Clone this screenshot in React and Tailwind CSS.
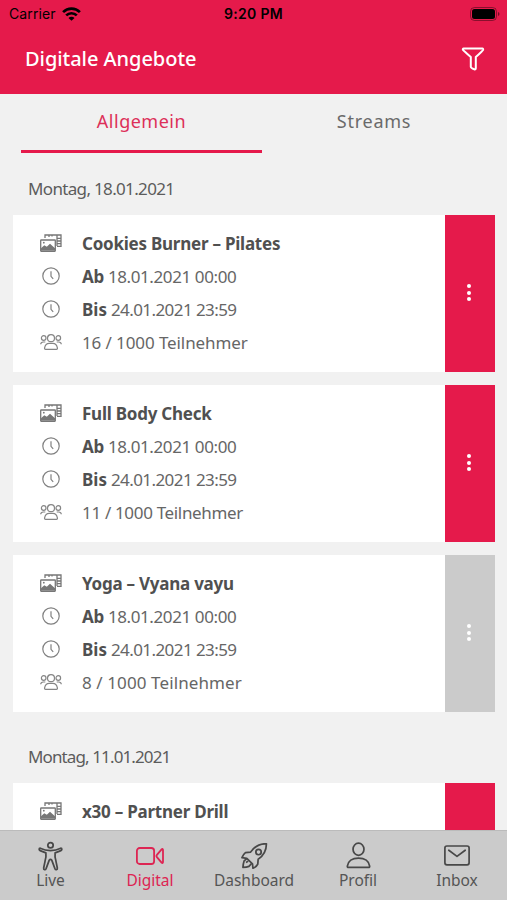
import clsx from "clsx";

const days = [
  {
    label: "Montag, 18.01.2021",
    labelClass: "tracking-[-0.66px]",
    items: [
      {
        title: "Cookies Burner – Pilates",
        from: "18.01.2021 00:00",
        to: "24.01.2021 23:59",
        count: "16 / 1000 Teilnehmer",
        countClass: "tracking-[-0.1px]",
        active: true,
      },
      {
        title: "Full Body Check",
        from: "18.01.2021 00:00",
        to: "24.01.2021 23:59",
        count: "11 / 1000 Teilnehmer",
        countClass: "tracking-[-0.33px]",
        active: true,
      },
      {
        title: "Yoga – Vyana vayu",
        from: "18.01.2021 00:00",
        to: "24.01.2021 23:59",
        count: "8 / 1000 Teilnehmer",
        countClass: "tracking-[0.1px]",
        active: false,
      },
    ],
  },
  {
    label: "Montag, 11.01.2021",
    labelClass: "tracking-[-0.88px]",
    items: [{ title: "x30 – Partner Drill", active: true }],
  },
];

function WifiIcon() {
  return (
    <svg width="19" height="14" viewBox="0 0 19 14" fill="none" stroke="#000" strokeWidth="2.7">
      <path d="M1.1 5.100a12 12 0 0 1 16.800 0" />
      <path d="M4.200 8.400a7.600 7.600 0 0 1 10.600 0" />
      <path d="M9.500 13.800 6.500 10.900a4.200 4.200 0 0 1 6 0z" fill="#000" stroke="none" />
    </svg>
  );
}

function BatteryIcon() {
  return (
    <svg width="30" height="14" viewBox="0 0 30 14">
      <rect x="0.5" y="0.5" width="26" height="13" rx="4" fill="none" stroke="#000" strokeOpacity="0.4" />
      <rect x="2" y="2" width="23" height="10" rx="2.5" fill="#000" />
      <path d="M28 5v4q1.500-.6 1.500-2T28 5" fill="#000" fillOpacity="0.5" />
    </svg>
  );
}

function FilterIcon() {
  return (
    <svg width="24" height="24" viewBox="0 0 24 24" fill="none" stroke="#fff" strokeWidth="2" strokeLinejoin="round">
      <path d="M2.600 1.600h18.800q1 0 .7 1.200-.3.800-7.300 7.300v11q0 1.700-1.500 1.200-3.500-1.400-3.500-2.600v-9.600Q2.300 3.500 1.900 2.800q-.4-1.200.7-1.200z" />
    </svg>
  );
}

function MediaIcon() {
  return (
    <svg width="22" height="18" viewBox="0 0 22 18" fill="none" stroke="#777" strokeWidth="1.300">
      <path d="M5 4V1h16v11.400h-4" />
      <path d="M17 1v11M17.500 4.400H21M17.500 7H21M17.500 9.600H21M9 1v2M12 1v1.500" />
      <rect x="0.700" y="6" width="14.600" height="11.300" rx="0.500" fill="#fff" />
      <path d="m1 16.800v-2.500l3.300-3 2.500 1.500 3.200-3 5 4.500v2.500z" fill="#777" stroke="none" />
      <circle cx="3.800" cy="8.700" r="0.900" fill="#777" stroke="none" />
    </svg>
  );
}

function ClockIcon() {
  return (
    <svg width="18" height="18" viewBox="0 0 18 18" fill="none" stroke="#808080" strokeWidth="1.200">
      <circle cx="9" cy="9" r="8.200" />
      <path d="M9 4.300v5l2.200 2.500" />
    </svg>
  );
}

function GroupIcon() {
  return (
    <svg width="22" height="16" viewBox="0 0 22 16" fill="none" stroke="#858585" strokeWidth="1.200">
      <circle cx="11" cy="4.200" r="3.500" />
      <path d="M5.600 15.300q-1.300 0-1-1.500.9-4.400 4.600-4.400h3.600q3.700 0 4.600 4.400.3 1.500-1 1.500z" />
      <circle cx="3.700" cy="4" r="2.300" />
      <circle cx="18.300" cy="4" r="2.300" />
      <path d="M.7 10.300q.2-2.300 2.600-2.300h2M21.300 10.300q-.2-2.300-2.600-2.300h-2" />
    </svg>
  );
}

function LiveIcon() {
  return (
    <svg width="25" height="30" viewBox="0 0 26 30" fill="none" stroke="#484848" strokeWidth="1.800" strokeLinejoin="round">
      <circle cx="13" cy="3.800" r="2.800" />
      <path d="M2.300 6.900q5 2.500 10.700 2.500t10.700-2.500q1.100 0 1.100 1.100 0 1-1 1.400l-6 2.300q-.5 4 .8 8.300l1.500 7.500q.2 1.400-.9 1.600-1.100.2-1.600-1l-3.200-8.600q-1.400-1.800-2.800 0l-3.200 8.600q-.5 1.200-1.600 1-1.100-.2-.9-1.600L7.400 20q1.300-4.300.8-8.300l-6-2.300q-1-.4-1-1.400 0-1.100 1.100-1.100z" />
    </svg>
  );
}

function CameraIcon() {
  return (
    <svg width="28" height="18" viewBox="0 0 28 18" fill="none" stroke="#dd2553" strokeWidth="1.800" strokeLinejoin="round">
      <rect x="0.900" y="1" width="17.200" height="16" rx="2.800" />
      <path d="M20.700 8.200 25.600 2.300q1.400-.8 1.400.7v12q0 1.500-1.400.7l-4.900-5.900q-.7-.8 0-1.600z" />
    </svg>
  );
}

function RocketIcon() {
  return (
    <svg width="27" height="26" viewBox="0 0 28 27" fill="none" stroke="#484848" strokeWidth="1.800" strokeLinejoin="round">
      <path d="M26.400.9Q18 .3 12.200 6.700L10 9.400 4.600 10q-2.400 1.800-3.600 5.200l5 .7 5.900 5.700.5 4.600q3.900-1.500 5-4.200l.4-5.100Q26.300 11.500 26.400.9z" />
      <circle cx="18.200" cy="9.400" r="2.800" />
      <path d="M6 16.200 3.200 18.600q-1.100 3.200-1.200 6.700 3.800-.1 6.200-1l2.800-3M5.200 20.300l2.300-1.500" />
    </svg>
  );
}

function ProfileIcon() {
  return (
    <svg width="25" height="27" viewBox="0 0 26 28" fill="none" stroke="#484848" strokeWidth="1.800" strokeLinejoin="round">
      <ellipse cx="13" cy="7.500" rx="5.700" ry="6.300" />
      <path d="M2.500 26.400q-1.200 0-1.100-1.300C2 20 6.500 16.700 13 16.700s11 3.300 11.600 8.400q.1 1.300-1.100 1.300z" />
    </svg>
  );
}

function InboxIcon() {
  return (
    <svg width="26" height="21" viewBox="0 0 26 21" fill="none" stroke="#484848" strokeWidth="1.700" strokeLinejoin="round" strokeLinecap="round">
      <rect x="0.900" y="1" width="24.200" height="18.800" rx="2" />
      <path d="m4.800 5.200 8.200 6.200 8.200-6.200" />
    </svg>
  );
}

function Row({ icon, children }) {
  return (
    <div className="flex h-[33px] items-center">
      <span className="flex w-[76px] shrink-0 justify-center pb-[3px]">{icon}</span>
      <span className="-ml-[7px] flex pb-[2px] whitespace-pre">{children}</span>
    </div>
  );
}

function CourseCard({ item }) {
  return (
    <div className="flex h-[157px] bg-white">
      <div className="flex-1 pt-[13px] text-[17px] text-[#666]">
        <Row icon={<MediaIcon />}>
          <b className="tracking-[-0.24px] text-[#505050]">{item.title}</b>
        </Row>
        {item.from && (
          <>
            <Row icon={<ClockIcon />}>
              <b className="mr-1 tracking-[-0.3px] text-[#505050]">Ab</b>
              <span className="tracking-[-0.4px]">{item.from}</span>
            </Row>
            <Row icon={<ClockIcon />}>
              <b className="mr-1 text-[#505050]">Bis</b>
              <span className="tracking-[-0.58px]">{item.to}</span>
            </Row>
            <Row icon={<GroupIcon />}>
              <span className={item.countClass}>{item.count}</span>
            </Row>
          </>
        )}
      </div>
      <button
        className={clsx(
          "flex w-[50px] flex-col items-center justify-center gap-[2.5px] pr-[2px] pb-[2px]",
          item.active ? "bg-[#e51a4b]" : "bg-[#cbcbcb]"
        )}>
        <i className="size-1 rounded-full bg-white" />
        <i className="size-1 rounded-full bg-white" />
        <i className="size-1 rounded-full bg-white" />
      </button>
    </div>
  );
}

const tabs = [
  { label: "Live", icon: <LiveIcon />, width: "w-[99px]" },
  { label: "Digital", icon: <CameraIcon />, width: "w-[100px]", active: true },
  { label: "Dashboard", icon: <RocketIcon />, width: "w-[108px]" },
  { label: "Profil", icon: <ProfileIcon />, width: "w-[100px]" },
  { label: "Inbox", icon: <InboxIcon />, width: "w-[98px]" },
];

export default function App() {
  return (
    <div className="flex h-[900px] w-[507px] flex-col overflow-hidden bg-[#f1f1f1] font-['Noto_Sans',sans-serif]">
      <header className="h-[94px] shrink-0 bg-[#e51a4b]">
        <div className="grid h-[27px] grid-cols-3 items-center px-[9px] font-['Inter',sans-serif] text-[14px] text-black">
          <div className="flex items-center gap-[6px]">
            <span className="tracking-[0.1px]">Carrier</span>
            <WifiIcon />
          </div>
          <span className="text-center font-semibold tracking-[0.3px]">9:20 PM</span>
          <span className="-mr-[2px] justify-self-end">
            <BatteryIcon />
          </span>
        </div>
        <div className="flex h-[63px] items-center justify-between pr-[22px] pl-[25px]">
          <h1 className="text-[20px] font-medium tracking-[-0.05px] text-white">Digitale Angebote</h1>
          <FilterIcon />
        </div>
      </header>

      <div className="flex h-[59px] shrink-0 px-[21px] text-[18px]">
        <div className="flex w-[241px] justify-center border-b-[3px] border-[#e51a4b] pt-[14px] tracking-[0.5px] text-[#dd3059]">
          Allgemein
        </div>
        <div className="flex flex-1 justify-center pt-[14px] tracking-[0.75px] text-[#6a6a6a]">Streams</div>
      </div>

      <main className="min-h-0 flex-1 overflow-hidden pr-[12px] pl-[13px]">
        {days.map((day) => (
          <section key={day.label} className="mb-[9px]">
            <h2 className="flex h-[62px] items-center pt-[10px] pl-[15px] text-[17px] text-[#5c5c5c]">
              <span className={day.labelClass}>{day.label}</span>
            </h2>
            <div className="flex flex-col gap-[13px]">
              {day.items.map((item) => (
                <CourseCard key={item.title} item={item} />
              ))}
            </div>
          </section>
        ))}
      </main>

      <nav className="flex h-[70px] shrink-0 border-t border-[#bbb] bg-[#cbcbcb] pl-[1px] text-[15.5px]">
        {tabs.map((tab) => (
          <div
            key={tab.label}
            className={clsx("flex flex-col items-center pt-[9px]", tab.width, tab.active ? "text-[#dd2553]" : "text-[#555]")}>
            <span className="flex h-[31px] items-center">{tab.icon}</span>
            <span className="-mt-[2px]">{tab.label}</span>
          </div>
        ))}
      </nav>
    </div>
  );
}
